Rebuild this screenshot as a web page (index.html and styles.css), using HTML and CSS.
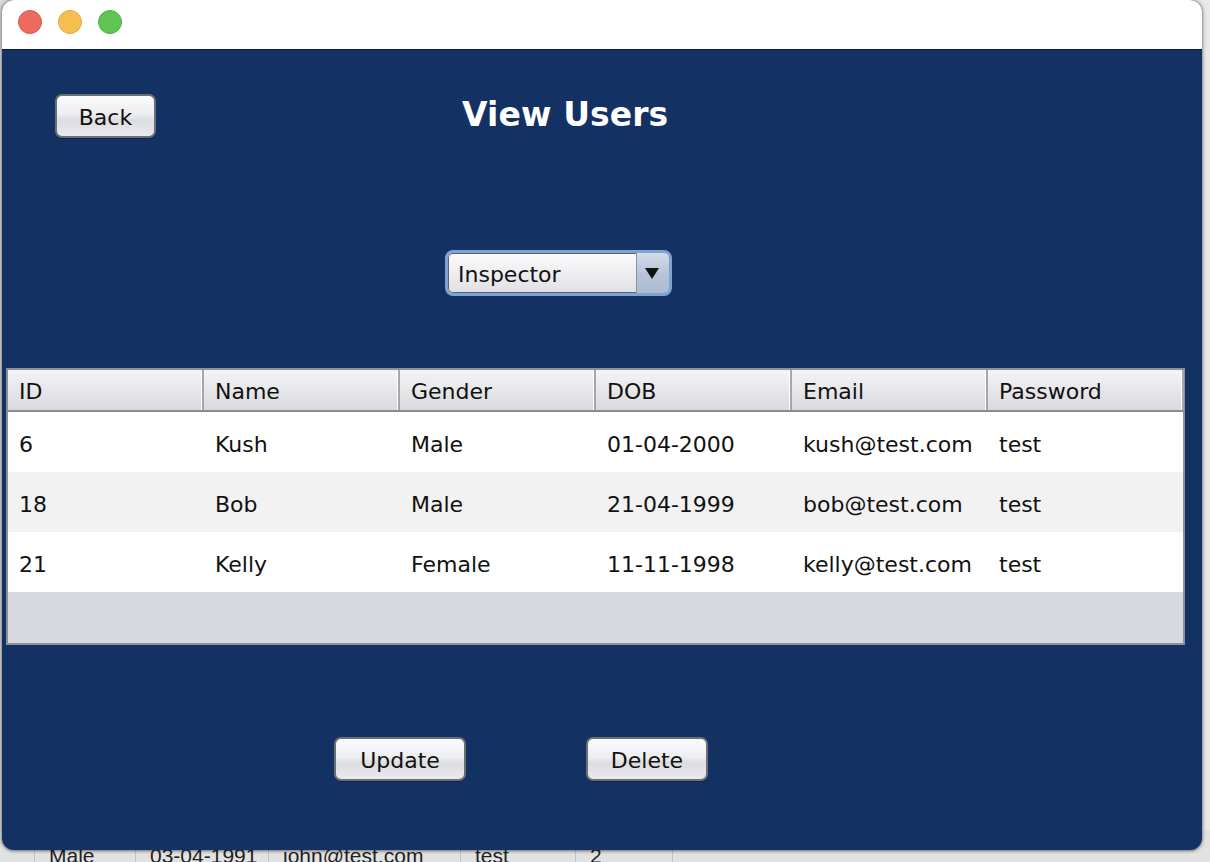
FILE: index.html
```html
<!DOCTYPE html>
<html>
<head>
<meta charset="utf-8">
<link rel="stylesheet" href="styles.css">
</head>
<body>
<div class="desk">
  <div class="behind">
    <div class="behind-row">
      <span class="bc c1">Male</span>
      <span class="bc c2">03-04-1991</span>
      <span class="bc c3">john@test.com</span>
      <span class="bc c4">test</span>
      <span class="bc c5">2</span>
      <span class="bc c6"></span>
    </div>
  </div>
  <div class="window">
    <div class="titlebar">
      <span class="light red"></span>
      <span class="light yellow"></span>
      <span class="light green"></span>
    </div>
    <div class="content">
      <div class="top-row">
        <button class="btn back">Back</button>
        <h1 class="title">View Users</h1>
      </div>
      <div class="combo-row">
        <div class="combo">
          <span class="combo-text">Inspector</span>
          <span class="combo-arrow">
            <svg width="14" height="11" viewBox="0 0 14 11"><path d="M0 0 L14 0 L7 11 Z" fill="#111"/></svg>
          </span>
        </div>
      </div>
      <div class="table">
        <div class="thead">
          <div class="th">ID</div>
          <div class="th">Name</div>
          <div class="th">Gender</div>
          <div class="th">DOB</div>
          <div class="th">Email</div>
          <div class="th">Password</div>
        </div>
        <div class="tr">
          <div class="td">6</div><div class="td">Kush</div><div class="td">Male</div><div class="td">01-04-2000</div><div class="td">kush@test.com</div><div class="td">test</div>
        </div>
        <div class="tr alt">
          <div class="td">18</div><div class="td">Bob</div><div class="td">Male</div><div class="td">21-04-1999</div><div class="td">bob@test.com</div><div class="td">test</div>
        </div>
        <div class="tr">
          <div class="td">21</div><div class="td">Kelly</div><div class="td">Female</div><div class="td">11-11-1998</div><div class="td">kelly@test.com</div><div class="td">test</div>
        </div>
        <div class="empty"></div>
      </div>
      <div class="actions">
        <button class="btn update">Update</button>
        <button class="btn delete">Delete</button>
      </div>
    </div>
  </div>
</div>
</body>
</html>
```

FILE: styles.css
```css
* { box-sizing: border-box; }
html, body { margin: 0; padding: 0; }
body {
  width: 1210px;
  height: 862px;
  overflow: hidden;
  background: #e4e4e4;
  font-family: "DejaVu Sans", "Liberation Sans", sans-serif;
}
.desk {
  position: relative;
  width: 1210px;
  height: 862px;
  background: linear-gradient(to right, #dcdcdc 0, #e8e8e8 100%);
}
.behind {
  position: absolute;
  left: 0;
  top: 830px;
  width: 1210px;
  height: 32px;
  background: #e2e2e2;
}
.behind-row {
  display: flex;
  height: 32px;
  padding-top: 14px;
  padding-left: 34px;
}
.bc {
  font-family: "Liberation Sans", Arial, sans-serif;
  font-size: 21px;
  color: #222;
  padding-left: 14px;
  border-left: 1px solid #c4c4c4;
  height: 18px;
  line-height: 24px;
}
.c1 { width: 101px; }
.c2 { width: 133px; }
.c3 { width: 192px; }
.c4 { width: 115px; }
.c5 { width: 97px; }
.c6 { width: 10px; }
.window {
  position: absolute;
  left: 2px;
  top: 0;
  width: 1200px;
  height: 850px;
  border-radius: 12px;
  overflow: hidden;
  background: #133162;
  box-shadow: 0 0 4px rgba(0,0,0,0.45), 0 1px 3px rgba(0,0,0,0.3);
}
.titlebar {
  height: 50px;
  background: #fff;
  border-bottom: 1px solid #0a1d45;
  display: flex;
  align-items: center;
  padding-left: 16px;
  gap: 16px;
  padding-bottom: 6px;
}
.light {
  width: 24px;
  height: 24px;
  border-radius: 50%;
  display: block;
}
.red { background: #ed6a5e; border: 1px solid #d9584d; }
.yellow { background: #f5bf4f; border: 1px solid #dfa93c; }
.green { background: #61c554; border: 1px solid #4fae43; }
.content {
  display: flex;
  flex-direction: column;
}
.top-row {
  display: flex;
  align-items: flex-start;
  padding-top: 44px;
  padding-left: 53px;
}
.btn {
  height: 44px;
  border: 2px solid #6b6f76;
  border-radius: 7px;
  background: linear-gradient(to bottom, #fbfbfc 0%, #eeeef1 45%, #dcdde1 60%, #e9eaee 100%);
  font-family: "DejaVu Sans", sans-serif;
  font-size: 22px;
  color: #111;
  padding: 2px 0 0 0;
  box-shadow: 0 1px 0 rgba(0,0,0,0.25);
}
.back { width: 101px; }
.title {
  margin: 0;
  margin-left: 306px;
  margin-top: -3px;
  font-size: 33px;
  font-weight: bold;
  color: #fff;
  line-height: 48px;
  letter-spacing: 0.1px;
}
.combo-row {
  display: flex;
  padding-left: 443px;
  margin-top: 111px;
}
.combo {
  width: 227px;
  height: 46px;
  border: 3px solid #7fa2d3;
  border-radius: 8px;
  display: flex;
  background: linear-gradient(to bottom, #fbfbfc 0%, #eeeef1 50%, #dfe0e4 100%);
  box-shadow: inset 0 0 0 1px #5a6270;
  overflow: hidden;
}
.combo-text {
  flex: 1;
  font-size: 22px;
  color: #111;
  padding-left: 10px;
  padding-top: 6px;
  line-height: 32px;
}
.combo-arrow {
  width: 33px;
  border-left: 1px solid #8a93a4;
  background: linear-gradient(to bottom, #d4dcea 0%, #b8c4d8 50%, #aebbd1 100%);
  display: flex;
  align-items: center;
  justify-content: center;
  padding-right: 2px;
}
.table {
  margin-top: 72px;
  margin-left: 4px;
  width: 1179px;
  border: 2px solid #8e9097;
  background: #d8d9de;
  display: flex;
  flex-direction: column;
}
.thead {
  display: grid;
  grid-template-columns: repeat(6, 196px);
  height: 42px;
  background: linear-gradient(to bottom, #f4f4f6 0%, #e7e7ea 50%, #d9dadf 100%);
  border-bottom: 2px solid #878a91;
}
.th {
  font-size: 22px;
  color: #111;
  padding-left: 11px;
  padding-top: 4px;
  line-height: 36px;
  border-right: 2px solid #a5a7ad;
  box-shadow: inset -1px 0 0 #fff;
}
.tr {
  display: grid;
  grid-template-columns: repeat(6, 196px);
  height: 60px;
  background: #fff;
}
.tr.alt { background: #f2f2f2; }
.td {
  font-size: 22px;
  color: #111;
  padding-left: 11px;
  padding-top: 6px;
  line-height: 54px;
}
.empty { height: 51px; }
.actions {
  display: flex;
  margin-top: 92px;
  padding-left: 332px;
}
.update { width: 132px; }
.delete { width: 122px; margin-left: 120px; }
```
